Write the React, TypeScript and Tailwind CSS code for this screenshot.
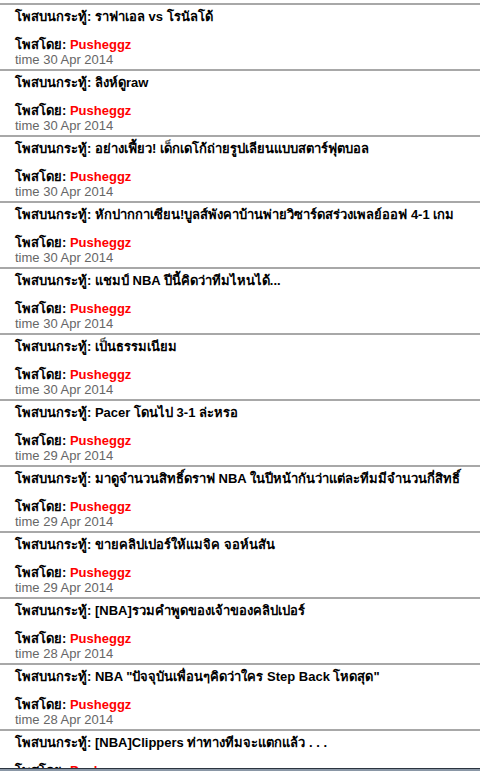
const posts = [
  { title: "ราฟาเอล vs โรนัลโด้", date: "30 Apr 2014" },
  { title: "ลิงห์ดูraw", date: "30 Apr 2014" },
  { title: "อย่างเฟี้ยว! เด็กเดโก้ถ่ายรูปเลียนแบบสตาร์ฟุตบอล", date: "30 Apr 2014" },
  { title: "หักปากกาเซียน!บูลส์พังคาบ้านพ่ายวิซาร์ดสร่วงเพลย์ออฟ 4-1 เกม", date: "30 Apr 2014" },
  { title: "แชมป์ NBA ปีนี้คิดว่าทีมไหนได้...", date: "30 Apr 2014" },
  { title: "เป็นธรรมเนียม", date: "30 Apr 2014" },
  { title: "Pacer โดนไป 3-1 ล่ะหรอ", date: "29 Apr 2014" },
  { title: "มาดูจำนวนสิทธิ์ดราฟ NBA ในปีหน้ากันว่าแต่ละทีมมีจำนวนกี่สิทธิ์", date: "29 Apr 2014" },
  { title: "ขายคลิปเปอร์ให้แมจิค จอห์นสัน", date: "29 Apr 2014" },
  { title: "[NBA]รวมคำพูดของเจ้าของคลิปเปอร์", date: "28 Apr 2014" },
  { title: "NBA \"ปัจจุบันเพื่อนๆคิดว่าใคร Step Back โหดสุด\"", date: "28 Apr 2014" },
  { title: "[NBA]Clippers ท่าทางทีมจะแตกแล้ว . . .", date: "28 Apr 2014" },
];

export default function App() {
  return (
    <div className="relative h-[771px] overflow-hidden bg-white pt-[3px] font-['Tahoma','Liberation_Sans',sans-serif] text-[13px]">
      {posts.map((post, i) => (
        <div key={i} className="h-[66px] overflow-hidden whitespace-nowrap border-t-2 border-[#a8a8a8] pl-[15px]">
          <div className="mt-[2px] h-[20px] leading-[20px] font-bold text-black">
            โพสบนกระทู้: {post.title}
          </div>
          <div className="mt-[10px] leading-[15px] font-bold text-black">
            โพสโดย: <span className="text-[#ff0000]">Pusheggz</span>
          </div>
          <div className="leading-[15px] text-[#666666]">time {post.date}</div>
        </div>
      ))}
      <div className="absolute bottom-0 left-0 right-0 h-[3px] border-t border-[#2b3440] bg-[#8a97a6]" />
    </div>
  );
}
